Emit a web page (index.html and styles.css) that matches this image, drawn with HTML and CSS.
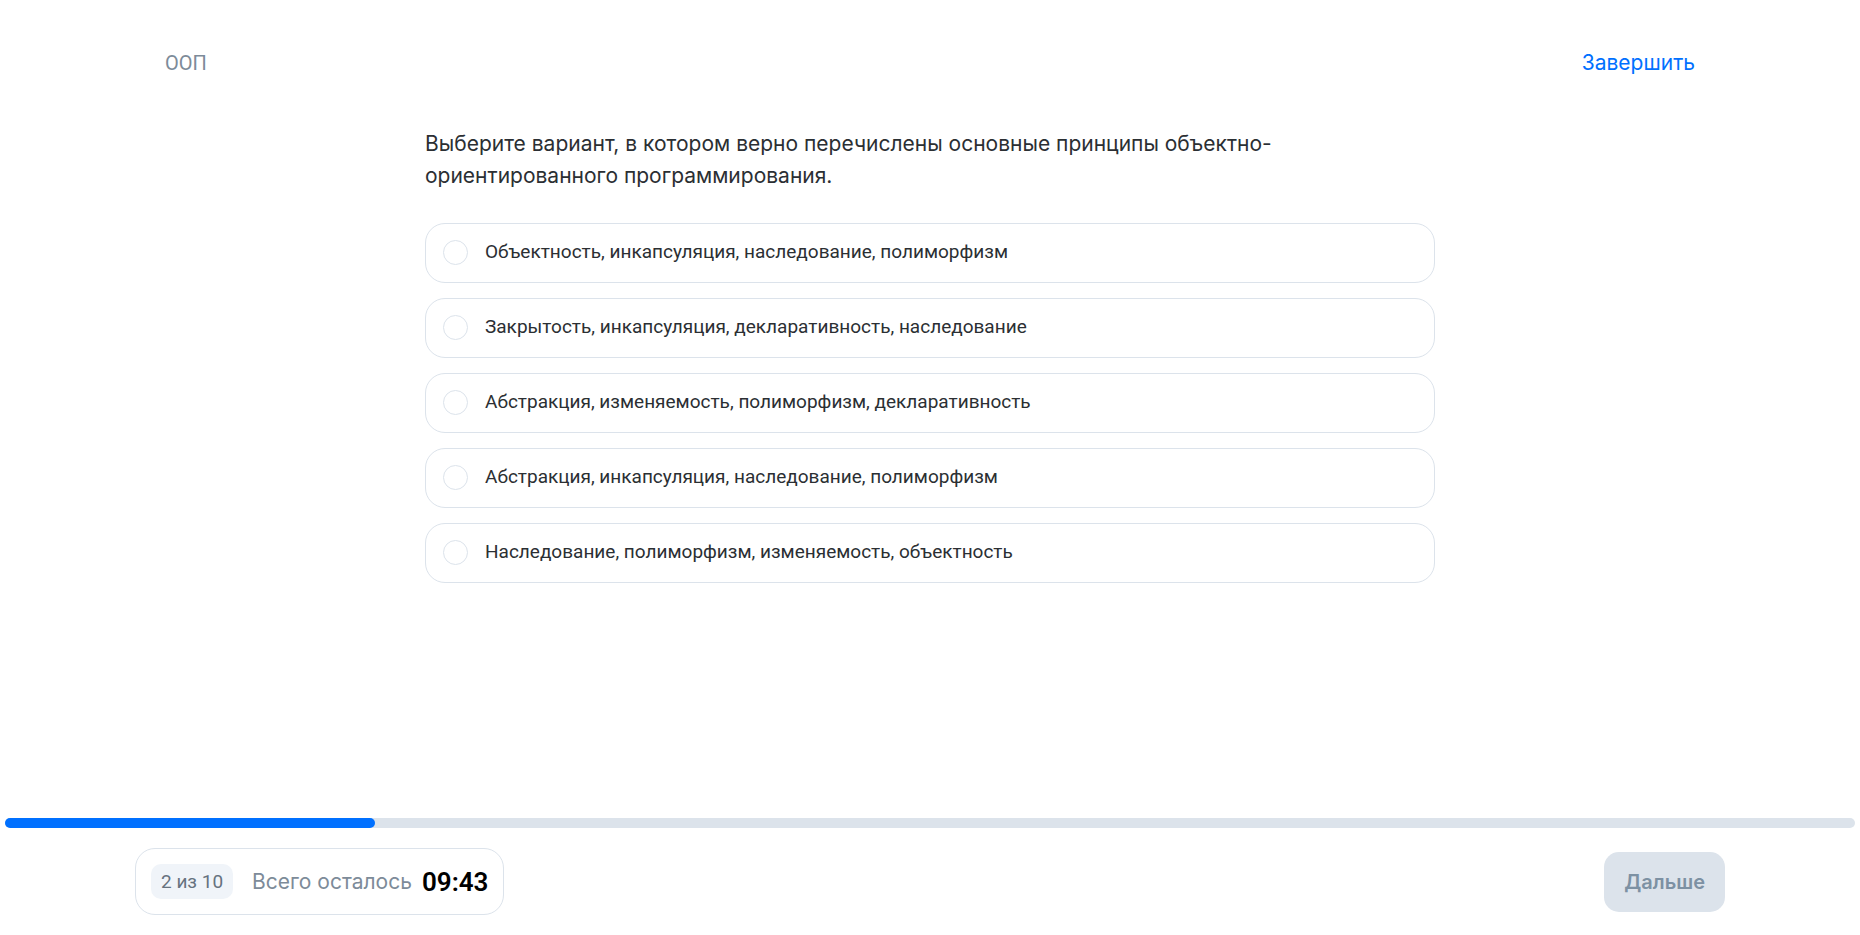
FILE: index.html
```html
<!DOCTYPE html>
<html lang="ru">
<head>
  <meta charset="utf-8">
  <meta name="viewport" content="width=device-width, initial-scale=1">
  <title>ООП</title>
  <link rel="stylesheet" href="styles.css">
</head>
<body>
  <div class="page">
    <header class="header">
      <h1 class="topic">ООП</h1>
      <button class="finish" type="button">Завершить</button>
    </header>

    <main class="quiz">
      <form id="quiz">
        <fieldset class="question">
          <legend class="question-text">Выберите вариант, в котором верно перечислены основные принципы объектно-ориентированного программирования.</legend>
          <div class="options">
            <label class="option"><input class="radio" type="radio" name="answer" value="1"><span>Объектность, инкапсуляция, наследование, полиморфизм</span></label>
            <label class="option"><input class="radio" type="radio" name="answer" value="2"><span>Закрытость, инкапсуляция, декларативность, наследование</span></label>
            <label class="option"><input class="radio" type="radio" name="answer" value="3"><span>Абстракция, изменяемость, полиморфизм, декларативность</span></label>
            <label class="option"><input class="radio" type="radio" name="answer" value="4"><span>Абстракция, инкапсуляция, наследование, полиморфизм</span></label>
            <label class="option"><input class="radio" type="radio" name="answer" value="5"><span>Наследование, полиморфизм, изменяемость, объектность</span></label>
          </div>
        </fieldset>
      </form>
    </main>

    <footer class="footer">
      <div class="progress" role="progressbar" aria-label="Прогресс" aria-valuemin="0" aria-valuemax="10" aria-valuenow="2">
        <div class="progress-fill" style="width: 20%"></div>
      </div>
      <div class="controls">
        <div class="status">
          <span class="counter">2 из 10</span>
          <span class="remaining">Всего осталось</span>
          <time class="clock">09:43</time>
        </div>
        <button class="next" type="submit" form="quiz" disabled>Дальше</button>
      </div>
    </footer>
  </div>
</body>
</html>
```

FILE: styles.css
```css
* {
  box-sizing: border-box;
}

body {
  margin: 0;
  background: #fff;
  color: #2b2f33;
  font-family: Inter, "Liberation Sans", Arial, sans-serif;
}

button {
  border: 0;
  font-family: inherit;
  cursor: pointer;
}

.page {
  display: flex;
  flex-direction: column;
  min-height: 100vh;
}

.header,
.controls {
  display: flex;
  align-items: center;
  justify-content: space-between;
  width: 100%;
  max-width: 1590px;
  margin: 0 auto;
}

.header {
  padding: 48px 30px 0;
}

.topic,
.option,
.counter,
.clock {
  font-family: Roboto, "Liberation Sans", Arial, sans-serif;
}

.topic {
  margin: 0;
  color: #7d8b99;
  font-size: 20px;
  font-weight: 400;
  line-height: 30px;
}

.finish {
  padding: 0;
  background: none;
  color: #0070ff;
  font-size: 21px;
  line-height: 30px;
}

.quiz {
  flex: 1;
  width: 100%;
  max-width: 1010px;
  margin: 0 auto;
  padding: 50px 0 24px;
}

.question {
  min-width: 0;
  margin: 0;
  padding: 0;
  border: 0;
}

.question-text {
  max-width: 900px;
  padding: 0;
  font-size: 21px;
  line-height: 32px;
}

.options {
  display: flex;
  flex-direction: column;
  gap: 15px;
  padding-top: 31px;
}

.option {
  display: flex;
  align-items: center;
  gap: 17px;
  min-height: 60px;
  padding: 7px 17px 9px;
  border: 1px solid #dce3eb;
  border-radius: 20px;
  font-size: 19px;
  line-height: 24px;
  cursor: pointer;
}

.radio {
  flex: none;
  appearance: none;
  width: 25px;
  height: 25px;
  margin: 0;
  border: 1px solid #dce3eb;
  border-radius: 50%;
}

.radio:checked {
  border: 8px solid #0070ff;
}

.footer {
  padding: 0 5px 20px;
}

.progress {
  height: 10px;
  margin-bottom: 20px;
  border-radius: 5px;
  background: #dce3eb;
}

.progress-fill {
  height: 100%;
  border-radius: 5px;
  background: #0070ff;
}

.status {
  display: flex;
  align-items: center;
  min-height: 67px;
  padding: 0 15px;
  border: 1px solid #dce3eb;
  border-radius: 20px;
}

.counter {
  padding: 0 10px;
  border-radius: 10px;
  background: #f0f4f9;
  color: #66727f;
  font-size: 19px;
  line-height: 35px;
}

.remaining {
  margin: 0 10px 0 19px;
  color: #7d8b99;
  font-size: 21px;
}

.clock {
  color: #000;
  font-size: 26px;
  font-weight: 600;
}

.next {
  min-height: 60px;
  padding: 0 20px;
  border-radius: 15px;
  background: #dce3eb;
  color: #7d91a3;
  font-size: 20px;
  font-weight: 600;
}
```
